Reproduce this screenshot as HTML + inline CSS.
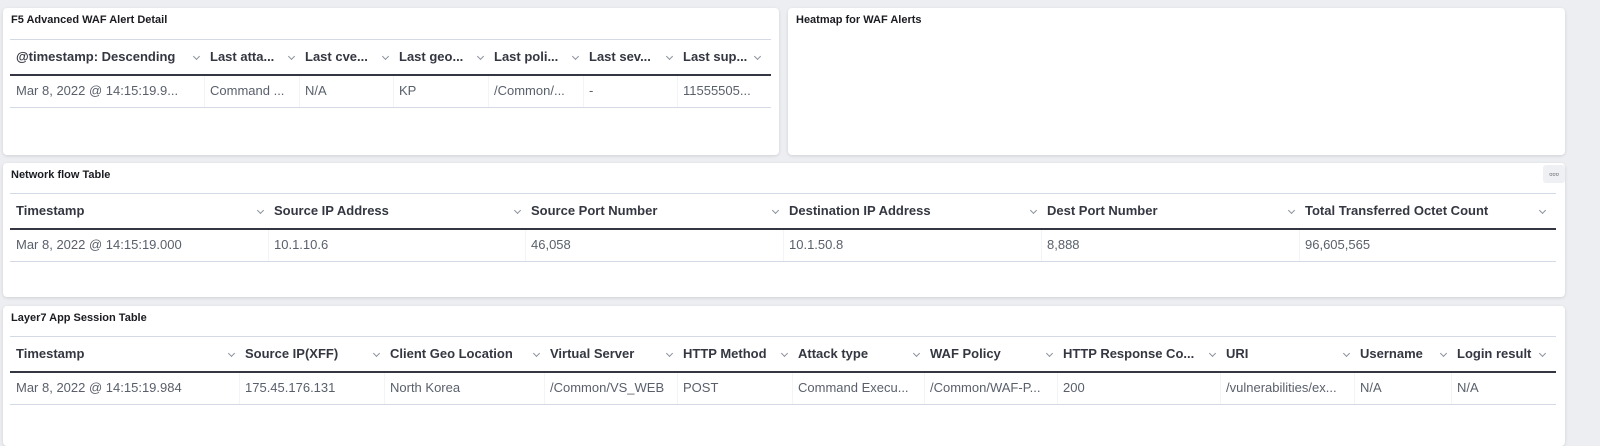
<!DOCTYPE html>
<html><head><meta charset="utf-8"><style>
*{margin:0;padding:0;box-sizing:border-box}
body{width:1600px;height:444px;background:#eceef2;font-family:"Liberation Sans",sans-serif;position:relative;overflow:hidden}
.p{position:absolute;background:#fff;border-radius:4px;box-shadow:0 1px 3px rgba(0,0,0,.12)}
.t{position:absolute;left:8px;top:6px;font-size:11px;font-weight:bold;color:#1a1c21}
.c{position:absolute;font-size:13px;white-space:nowrap}
.h{font-weight:bold;color:#343741}
.d{color:#5a606b}
.chev{position:absolute;width:5px;height:5px;border-right:1px solid #8a909b;border-bottom:1px solid #8a909b;transform:rotate(45deg)}
.ln{position:absolute;height:1px;background:#d3dae6}
.tk{position:absolute;height:2px;background:#343741}
.vs{position:absolute;width:1px;background:#f3f4f7}
</style></head><body>
<div class="p" style="left:3px;top:8px;width:776px;height:147px"><div class="t">F5 Advanced WAF Alert Detail</div></div>
<div class="p" style="left:788px;top:8px;width:777px;height:147px"><div class="t">Heatmap for WAF Alerts</div></div>
<div class="p" style="left:3px;top:163px;width:1562px;height:134px"><div class="t">Network flow Table</div>
<div style="position:absolute;right:0;top:2px;width:22px;height:18px;background:#eef0f3;border-radius:3px;font-size:9px;color:#333;text-align:center;line-height:18px">▫▫▫</div></div>
<div class="p" style="left:3px;top:306px;width:1562px;height:140px"><div class="t">Layer7 App Session Table</div></div>
<div id="x"></div>
<script>
function tbl(top,cols,end,hdr,dat){
 let h='';
 h+=`<div class="ln" style="left:10px;top:${top}px;width:${end-10}px"></div>`;
 h+=`<div class="tk" style="left:10px;top:${top+35}px;width:${end-10}px"></div>`;
 h+=`<div class="ln" style="left:10px;top:${top+68}px;width:${end-10}px"></div>`;
 cols.forEach((x,i)=>{
  let nx=i<cols.length-1?cols[i+1]:end;
  h+=`<div class="c h" style="left:${x}px;top:${top+10}px">${hdr[i]}</div>`;
  h+=`<div class="chev" style="left:${nx-16}px;top:${top+15}px"></div>`;
  h+=`<div class="c d" style="left:${x}px;top:${top+44}px">${dat[i]}</div>`;
  if(i>0)h+=`<div class="vs" style="left:${x-6}px;top:${top+37}px;height:31px"></div>`;
 });
 return h;
}
let s='';
s+=tbl(39,[16,210,305,399,494,589,683],771,
['@timestamp: Descending','Last atta...','Last cve...','Last geo...','Last poli...','Last sev...','Last sup...'],
['Mar 8, 2022 @ 14:15:19.9...','Command ...','N/A','KP','/Common/...','-','11555505...']);
s+=tbl(193,[16,274,531,789,1047,1305],1556,
['Timestamp','Source IP Address','Source Port Number','Destination IP Address','Dest Port Number','Total Transferred Octet Count'],
['Mar 8, 2022 @ 14:15:19.000','10.1.10.6','46,058','10.1.50.8','8,888','96,605,565']);
s+=tbl(336,[16,245,390,550,683,798,930,1063,1226,1360,1457],1556,
['Timestamp','Source IP(XFF)','Client Geo Location','Virtual Server','HTTP Method','Attack type','WAF Policy','HTTP Response Co...','URI','Username','Login result'],
['Mar 8, 2022 @ 14:15:19.984','175.45.176.131','North Korea','/Common/VS_WEB','POST','Command Execu...','/Common/WAF-P...','200','/vulnerabilities/ex...','N/A','N/A']);
document.getElementById('x').innerHTML=s;
</script>
</body></html>
